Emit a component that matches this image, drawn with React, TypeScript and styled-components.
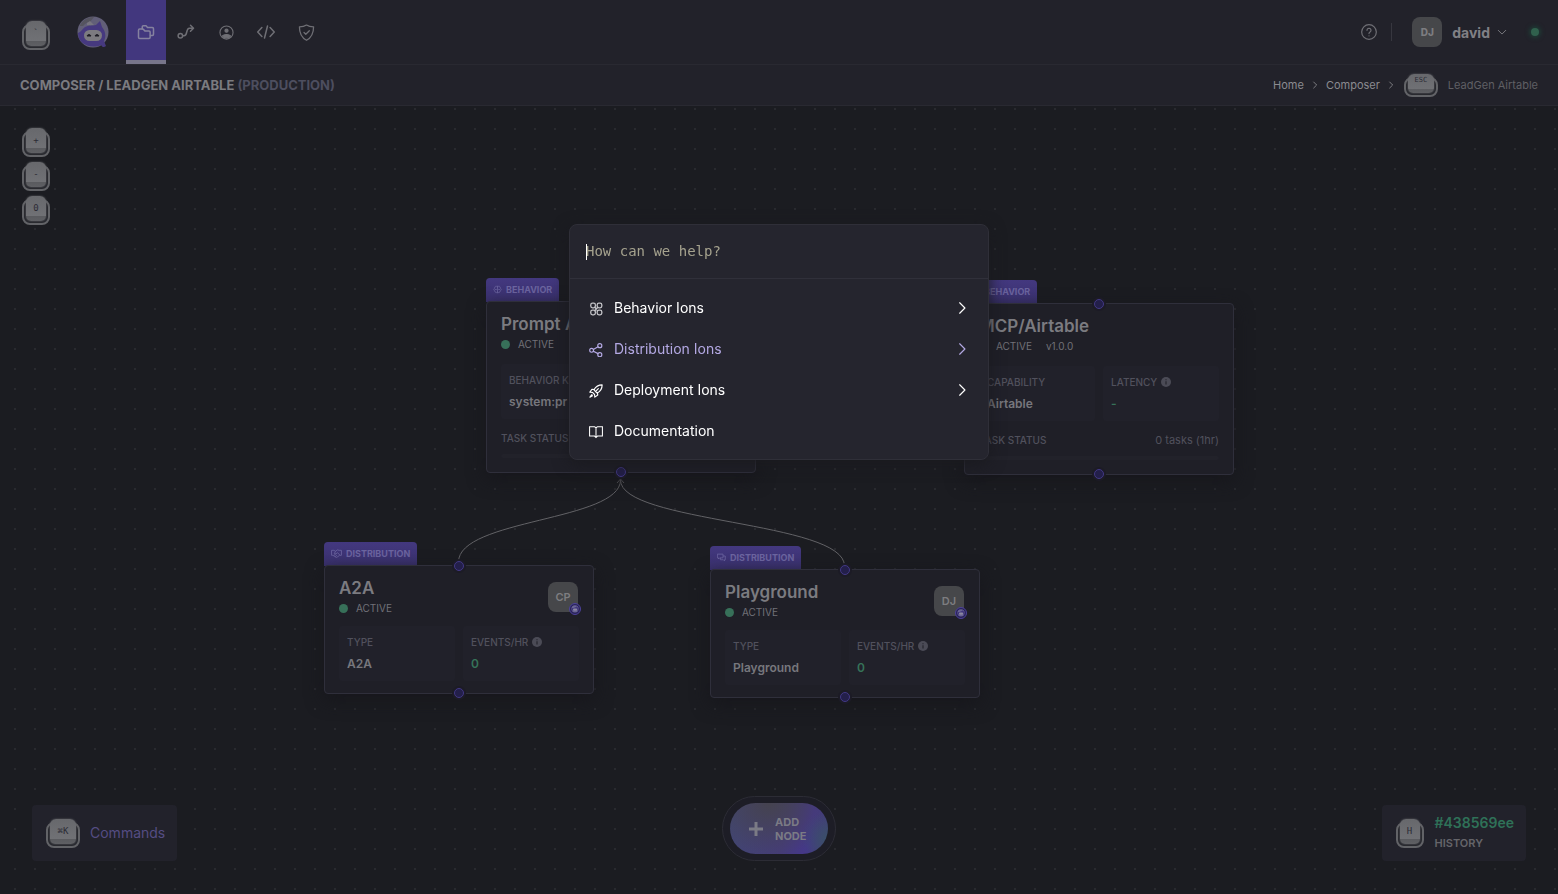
import React from "react";
import styled, { createGlobalStyle, css } from "styled-components";

const GlobalStyle = createGlobalStyle`
  *, *::before, *::after { box-sizing: border-box; }
  body {
    margin: 0;
    background: #1b1c21;
    color: #7a7a80;
    font-family: Inter, "Liberation Sans", sans-serif;
    font-size: 11px;
  }
  button, input { font: inherit; color: inherit; background: none; border: 0; padding: 0; margin: 0; }
  a { color: inherit; text-decoration: none; }
  h1, h2, p, dl, dd, dt, ul, ol { margin: 0; padding: 0; font-size: inherit; list-style: none; }
  svg { display: block; flex: none; }
`;

const Page = styled.div`
  min-height: 100vh;
  display: flex;
  flex-direction: column;
`;

/* ---------- keyboard caps ---------- */

const KeyFrame = styled.button<{ $w: number; $h: number }>`
  position: relative;
  flex: none;
  display: block;
  width: ${(p) => p.$w}px;
  height: ${(p) => p.$h}px;
  padding: 1px 4px 4px;
  &::before {
    content: "";
    position: absolute;
    inset: 4px 0 0;
    border: 2px solid #626367;
    border-radius: 8px;
    background: #26272d;
  }
`;

const KeyFace = styled.span<{ $size: number; $small: boolean }>`
  position: relative;
  display: block;
  height: 100%;
  padding-top: ${(p) => (p.$small ? 1 : 7)}px;
  border-radius: 6px 6px 5px 5px;
  background: linear-gradient(#67686c, #707175 78%, #5a5b5f 82%, #5f6064);
  box-shadow: 0 0 2px #66676b;
  font-family: "DejaVu Sans Mono", monospace;
  font-size: ${(p) => p.$size}px;
  line-height: 10px;
  text-align: center;
  white-space: nowrap;
  color: #2b2b35;
`;

function KeyCap({ label, w = 28, h = 30, size = 9, title }: { label: string; w?: number; h?: number; size?: number; title: string }) {
  return (
    <KeyFrame $w={w} $h={h} type="button" aria-label={title}>
      <KeyFace $size={size} $small={h < 30}>{label}</KeyFace>
    </KeyFrame>
  );
}

/* ---------- top bars ---------- */

const TopBar = styled.header`
  display: flex;
  align-items: center;
  height: 65px;
  padding: 0 15px 0 22px;
  background: #22222a;
  border-bottom: 1px solid #292931;
`;

const BrandLink = styled.a`
  margin: 0 17px 0 27px;
`;

const KeySlot = styled.div`
  padding-top: 6px;
`;

const Nav = styled.nav`
  display: flex;
  height: 64px;
`;

const NavTab = styled.a<{ $active?: boolean }>`
  display: flex;
  align-items: center;
  justify-content: center;
  width: 40px;
  height: 64px;
  color: #6f6f75;
  border-bottom: 4px solid transparent;
  border-top: 4px solid transparent;
  ${(p) =>
    p.$active &&
    css`
      background: #42377e;
      border-top-color: #42377e;
      border-bottom-color: #77758a;
      color: #85819f;
    `}
`;

const Account = styled.div`
  display: flex;
  align-items: center;
  margin-left: auto;
`;

const IconButton = styled.button`
  display: flex;
  color: #6f6f75;
`;

const Divider = styled.span`
  width: 1px;
  height: 18px;
  margin: 0 20px 0 14px;
  background: #37373f;
`;

const Avatar = styled.span<{ $small?: boolean }>`
  display: grid;
  place-items: center;
  width: 30px;
  height: 30px;
  border-radius: 8px;
  background: #46474a;
  color: #7d7d80;
  font-size: ${(p) => (p.$small ? 10 : 11)}px;
  font-weight: ${(p) => (p.$small ? 800 : 600)};
`;

const UserButton = styled.button`
  display: flex;
  align-items: center;
  gap: 7px;
  margin-left: 10px;
  color: #808085;
  font-size: 14px;
  font-weight: 700;
`;

const OnlineDot = styled.span`
  width: 8px;
  height: 8px;
  margin: 0 4px 0 24px;
  border-radius: 50%;
  background: #30614d;
  box-shadow: 0 0 4px 2px #1e3c35;
`;

const TitleBar = styled.div`
  display: flex;
  align-items: center;
  justify-content: space-between;
  height: 41px;
  padding: 0 20px;
  background: #22222a;
  border-bottom: 1px solid #292931;
`;

const PageTitle = styled.h1`
  font-size: 13px;
  font-weight: 700;
  line-height: 16px;
  color: #7b7b80;
  text-transform: uppercase;
`;

const Muted = styled.span`
  color: #4d4e5f;
`;

const Crumbs = styled.ol`
  display: flex;
  align-items: center;
  gap: 7px;
  font-size: 11px;
  color: #8b8b90;
  li { display: flex; align-items: center; gap: 7px; }
`;

const CurrentCrumb = styled.span`
  margin-left: 3px;
  color: #5f5f64;
`;

const BackSlot = styled.span`
  padding-left: 2px;
`;

/* ---------- canvas ---------- */

const Canvas = styled.main`
  position: relative;
  flex: 1;
  overflow: hidden;
  background-color: #1b1c21;
  background-image: radial-gradient(circle at 50% 50%, #292a2f 0, #292a2f 1px, transparent 1px);
  background-size: 20px 20px;
  background-position: 5px -7px;
`;

const ZoomControls = styled.div`
  position: absolute;
  left: 22px;
  top: 21px;
  display: flex;
  flex-direction: column;
  gap: 4px;
`;

const Edges = styled.svg`
  position: absolute;
  left: 0;
  top: 0;
  width: 100%;
  height: 100%;
`;

const NodeBox = styled.section<{ $x: number; $y: number }>`
  position: absolute;
  left: ${(p) => p.$x}px;
  top: ${(p) => p.$y}px;
  width: 270px;
`;

const NodeTab = styled.div`
  display: inline-flex;
  align-items: center;
  gap: 4px;
  height: 24px;
  padding: 0 7px 2px;
  border-radius: 4px 4px 0 0;
  background: linear-gradient(#43387f, #3a316f);
  color: #6c65a0;
  font-size: 9px;
  font-weight: 700;
  vertical-align: top;
`;

const NodeCard = styled.div`
  position: relative;
  margin-top: -1px;
  padding: 11px 14px 12px;
  border: 1px solid #2f2f3b;
  border-radius: 4px;
  background: #1f1f27;
  box-shadow: 0 6px 18px #17171c;
`;

const NodeHead = styled.div<{ $tall: boolean }>`
  display: flex;
  justify-content: space-between;
  align-items: flex-start;
  height: ${(p) => (p.$tall ? 51 : 49)}px;
`;

const NodeTitle = styled.h2`
  font-size: 17px;
  font-weight: 600;
  line-height: 22px;
  color: #7b7b80;
`;

const Status = styled.p`
  display: flex;
  align-items: center;
  font-size: 10px;
  line-height: 18px;
  color: #717177;
  gap: 14px;
`;

const StatusState = styled.span`
  display: flex;
  align-items: center;
  gap: 8px;
  &::before {
    content: "";
    width: 9px;
    height: 9px;
    border-radius: 50%;
    background: #377059;
  }
`;

const Owner = styled.div`
  position: relative;
  margin: 5px 1px 0 0;
`;

const OwnerBadge = styled.span`
  position: absolute;
  right: -3px;
  bottom: -3px;
`;

const Stats = styled.dl`
  display: grid;
  grid-template-columns: 1fr 1fr;
  gap: 8px;
`;

const Stat = styled.div`
  height: 55px;
  padding: 9px 8px;
  border-radius: 3px;
  background: #21212a;
  white-space: nowrap;
  overflow: hidden;
`;

const StatLabel = styled.dt`
  display: flex;
  align-items: center;
  gap: 4px;
  font-size: 10px;
  font-weight: 500;
  line-height: 14px;
  color: #51515d;
`;

const StatValue = styled.dd<{ $green?: boolean }>`
  padding-top: 7px;
  font-size: 12px;
  font-weight: 600;
  line-height: 16px;
  color: ${(p) => (p.$green ? "#367259" : "#77777d")};
`;

const TaskRow = styled.div`
  display: flex;
  justify-content: space-between;
  margin-top: 12px;
  font-size: 10px;
  font-weight: 500;
  line-height: 14px;
  color: #51515d;
`;

const TaskCount = styled.span`
  font-size: 11px;
  font-weight: 400;
`;

const TaskTrack = styled.div`
  height: 4px;
  margin: 9px 0 2px;
  border-radius: 2px;
  background: #22222a;
`;

const Port = styled.span<{ $side: "top" | "bottom" }>`
  position: absolute;
  left: calc(50% - 5px);
  ${(p) => p.$side}: -5px;
  width: 10px;
  height: 10px;
  border-radius: 50%;
  border: 1px solid #423885;
  background: #231f4a;
  box-shadow: 0 0 0 2px #1c1b26;
`;

/* ---------- bottom dock ---------- */

const Dock = styled.div`
  position: absolute;
  left: 0;
  right: 0;
  bottom: 33px;
  display: grid;
  grid-template-columns: 1fr auto 1fr;
  align-items: end;
  padding: 0 32px;
`;

const DockPanel = styled.div<{ $end?: boolean }>`
  display: flex;
  align-items: center;
  justify-self: ${(p) => (p.$end ? "end" : "start")};
  gap: ${(p) => (p.$end ? 11 : 10)}px;
  height: 56px;
  padding: 0 12px 0 14px;
  border-radius: 4px;
  background: #22222b;
`;

const CommandsLabel = styled.span`
  color: #554d83;
  font-size: 14px;
  line-height: 20px;
`;

const Commit = styled.div`
  font-weight: 600;
  line-height: 20px;
`;

const Hash = styled.p`
  color: #2f7158;
  font-size: 14px;
`;

const HistoryLabel = styled.p`
  font-size: 11px;
  color: #65656a;
`;

const AddRing = styled.div`
  padding: 6px 7px;
  border: 1px solid #2c2c35;
  border-radius: 34px;
  background: #1d1d26;
`;

const AddButton = styled.button`
  display: flex;
  align-items: center;
  gap: 11px;
  width: 98px;
  height: 51px;
  padding: 0 18px;
  border-radius: 26px;
  background:
    radial-gradient(circle at 100% 70%, #3a5069 0, transparent 26%),
    radial-gradient(ellipse at 40% 0, #45434f 0, transparent 75%),
    linear-gradient(100deg, #414672, #453c78 55%, #45378a 80%, #413f70);
  color: #7b7b85;
  font-size: 11px;
  font-weight: 700;
  line-height: 14px;
  text-align: left;
`;

/* ---------- command palette ---------- */

const Overlay = styled.div`
  position: fixed;
  inset: 0;
  display: flex;
  justify-content: center;
  align-items: flex-start;
  padding-top: 224px;
`;

const Palette = styled.div`
  width: 420px;
  border: 1px solid #2f2f38;
  border-radius: 8px;
  background: #25252e;
  box-shadow: 0 4px 16px #1a1a1f;
`;

const SearchRow = styled.div`
  position: relative;
  height: 54px;
  padding: 11px 16px 0;
  border-bottom: 1px solid #30303a;
`;

const Caret = styled.span`
  position: absolute;
  left: 16px;
  top: 19px;
  width: 1px;
  height: 16px;
  background: #ffffff;
`;

const SearchInput = styled.input`
  display: block;
  width: 100%;
  height: 30px;
  outline: none;
  caret-color: transparent;
  font-family: "DejaVu Sans Mono", monospace;
  font-size: 14px;
  color: #ffffff;
  &::placeholder { color: #a5a28e; opacity: 1; }
`;

const Options = styled.ul`
  padding: 8px 0;
`;

const OptionButton = styled.button<{ $selected?: boolean }>`
  display: flex;
  align-items: center;
  gap: 11px;
  width: 100%;
  height: 41px;
  padding: 0 19px;
  font-size: 14px;
  line-height: 20px;
  text-align: left;
  color: ${(p) => (p.$selected ? "#b4a9e4" : "#ffffff")};
`;

const OptionIcon = styled.span`
  padding-top: 2px;
`;

const OptionLabel = styled.span`
  flex: 1;
`;

/* ---------- drawings ---------- */

const Icon = ({ size = 16, sw = 2, children }: { size?: number; sw?: number; children: React.ReactNode }) => (
  <svg width={size} height={size} viewBox="0 0 24 24" fill="none" stroke="currentColor" strokeWidth={sw} strokeLinecap="round" strokeLinejoin="round" aria-hidden="true">
    {children}
  </svg>
);

const Chevron = ({ size = 10, sw = 2.4 }: { size?: number; sw?: number }) => (
  <Icon size={size} sw={sw}><path d="M8 3l9 9-9 9" /></Icon>
);

const FoldersIcon = () => (
  <Icon size={18} sw={2}>
    <path d="M7 8V5a1.500 1.500 0 0 1 1.500-1.500H12L14 6h6.500A1.500 1.500 0 0 1 22 7.500V15a1.500 1.500 0 0 1-1.500 1.500H18" />
    <path d="M3.500 8H8l2.500 2.500H16a1.500 1.500 0 0 1 1.500 1.500v7a1.500 1.500 0 0 1-1.500 1.500H3.500A1.500 1.500 0 0 1 2 19V9.500A1.500 1.500 0 0 1 3.500 8z" />
  </Icon>
);
const RouteIcon = () => (
  <Icon size={18}>
    <circle cx="4.500" cy="17" r="3" />
    <path d="M7.500 17h2c5 0 2-10 7-10h5M18 3l4 4-4 4" />
  </Icon>
);
const UserIcon = () => (
  <Icon size={15} sw={1.8}>
    <circle cx="12" cy="12" r="10.500" />
    <circle cx="12" cy="9" r="2.500" fill="currentColor" />
    <path d="M5.500 17.500c2.500-3 10.500-3 13 0-2 4-11 4-13 0z" fill="currentColor" />
  </Icon>
);
const CodeIcon = () => (
  <Icon size={18}><path d="M6.500 6L1 12l5.500 6M17.500 6l5.500 6-5.500 6M14 4l-4 16" /></Icon>
);
const ShieldIcon = () => (
  <Icon size={17} sw={1.8}>
    <path d="M12 1.500c3 2 6 2.500 10 2.500 0 9-2 15-10 19C4 19 2 13 2 4c4 0 7-.5 10-2.500z" />
    <path d="M8.500 12l2.500 2.500 5-5" />
  </Icon>
);
const HelpIcon = () => (
  <Icon sw={1.8}>
    <circle cx="12" cy="12" r="11" />
    <path d="M9 9.500a3 3 0 1 1 4.500 2.600c-1 .6-1.500 1.100-1.500 2.200M12 17.600v.2" />
  </Icon>
);
const InfoIcon = () => (
  <svg width="10" height="10" viewBox="0 0 10 10" aria-hidden="true">
    <circle cx="5" cy="5" r="5" fill="#4b4b56" />
    <path d="M5 2.200v1M5 4.300v3.300" stroke="#25252e" strokeWidth="1.200" />
  </svg>
);
const BrainIcon = () => (
  <Icon size={9}><path d="M12 3v18M12 5C8 1 4 4 5 8c-4 2-4 6 0 8 0 5 5 6 7 3M12 5c4-4 8-1 7 3 4 2 4 6 0 8 0 5-5 6-7 3M6 12h3M15 12h3" /></Icon>
);
const HandshakeIcon = () => (
  <svg width="11" height="9" viewBox="0 0 24 20" fill="none" stroke="currentColor" strokeWidth="1.900" aria-hidden="true">
    <path d="M1 3h5l4 2 4-3 4 1h5v11h-4l-7 5-8-5H1zM10 5l-3 5 4 1 3-3 6 6M6 14l4-2M9 17l4-3" />
  </svg>
);
const ChatIcon = () => (
  <Icon size={9} sw={2.2}><path d="M2 3h14v10H7l-3 3v-3H2zM17 8h5v10h-2v3l-3-3H9v-4" /></Icon>
);
const FoxLogo = () => (
  <svg width="32" height="32" viewBox="0 0 32 32" role="img" aria-label="Home">
    <circle cx="16" cy="16" r="15.500" fill="#625f78" />
    <path d="M2.500 10A15 15 0 0 1 17 1l-4 5c-3 0-5 2-7 4z" fill="#55545f" />
    <path d="M1 17c3-1 4-4 7-6 4-2 7-1 11-2l4-4 2 6c4 5 4 10 2 14l2 5c-2 2-4 1-5-1-9 4-23 0-23-12z" fill="#46397f" />
    <path d="M10 7l3-2 4 4h-7z" fill="#77757f" />
    <rect x="7" y="14" width="18" height="11" rx="5.500" fill="#7c7b80" />
    <path d="M10 20c1-2 3-2 4 0zM18 20c1-2 3-2 4 0z" fill="#1d1c24" stroke="#1d1c24" />
  </svg>
);
const FoxBadge = () => (
  <svg width="12" height="12" viewBox="0 0 12 12" aria-hidden="true">
    <circle cx="6" cy="6" r="5.500" fill="#282258" stroke="#4d429a" />
    <circle cx="6" cy="5.800" r="3.600" fill="#6a6596" />
    <path d="M2.800 5c2 0 4-.6 5-1.800L9.200 5v2.500H2.800z" fill="#40367d" />
    <rect x="4" y="5.600" width="4.200" height="2.200" rx="1" fill="#8a88a0" />
  </svg>
);
const PlusIcon = () => (
  <svg width="16" height="16" viewBox="0 0 16 16" aria-hidden="true">
    <path d="M8 1v14M1 8h14" stroke="currentColor" strokeWidth="3" />
  </svg>
);
const BehaviorIcon = () => (
  <Icon size={14} sw={2.2}>
    <g stroke="#c4c4c8">
      <rect x="3" y="2" width="8" height="8" rx="3" />
      <rect x="14" y="2" width="8" height="8" rx="3" />
      <rect x="3" y="14" width="8" height="8" rx="3" />
      <rect x="14" y="14" width="8" height="8" rx="3" />
      <path d="M10 9l5 6M15 9l-5 6" />
    </g>
  </Icon>
);
const ShareIcon = () => (
  <Icon size={14}>
    <circle cx="4.500" cy="12.500" r="3.300" />
    <circle cx="18.500" cy="4.500" r="3.500" />
    <circle cx="18.500" cy="20" r="3.500" />
    <path d="M7.500 11l8-4.500M7.500 14l8 4.200" />
  </Icon>
);
const RocketIcon = () => (
  <Icon size={14}>
    <path d="M22.500 1.500c-7 0-11 3-14 8.500l5.500 5.500c5.500-3 8.500-7 8.500-14z" />
    <path d="M9 9.500l-4-.5-3.500 5 4.500.5M14.500 15l.5 4-5 3.500-.5-4.500M11 13l5-5M6 14.500l3.500 3.500M5 18l-3.500 4.500L6 20" />
  </Icon>
);
const BookIcon = () => (
  <Icon size={14} sw={1.8}><path d="M1 3h8.500l2.500 1.500L14.500 3H23v16h-8.500L12 21.500 9.500 19H1zM12 4.500v17" strokeLinejoin="miter" /></Icon>
);

/* ---------- data ---------- */

type Item = { label: string; value: string; info?: boolean; green?: boolean };
type NodeData = {
  x: number;
  y: number;
  tab: string;
  icon: React.ReactNode;
  title: string;
  version?: string;
  owner?: string;
  stats: Item[];
  hasTasks?: boolean;
  tasks?: string;
};

const nodes: NodeData[] = [
  {
    x: 486, y: 172, tab: "Behavior", icon: <BrainIcon />, title: "Prompt A",
    stats: [{ label: "BEHAVIOR K", value: "system:pr" }],
    hasTasks: true,
  },
  {
    x: 964, y: 174, tab: "Behavior", icon: <BrainIcon />, title: "MCP/Airtable", version: "v1.0.0",
    stats: [{ label: "CAPABILITY", value: "Airtable" }, { label: "LATENCY", value: "-", info: true, green: true }],
    hasTasks: true, tasks: "0 tasks (1hr)",
  },
  {
    x: 324, y: 436, tab: "Distribution", icon: <HandshakeIcon />, title: "A2A", owner: "CP",
    stats: [{ label: "TYPE", value: "A2A" }, { label: "EVENTS/HR", value: "0", info: true, green: true }],
  },
  {
    x: 710, y: 440, tab: "Distribution", icon: <ChatIcon />, title: "Playground", owner: "DJ",
    stats: [{ label: "TYPE", value: "Playground" }, { label: "EVENTS/HR", value: "0", info: true, green: true }],
  },
];

function FlowNode({ node }: { node: NodeData }) {
  return (
    <NodeBox $x={node.x} $y={node.y}>
      <NodeTab>{node.icon}{node.tab.toUpperCase()}</NodeTab>
      <NodeCard>
        <NodeHead $tall={!!node.hasTasks}>
          <div>
            <NodeTitle>{node.title}</NodeTitle>
            <Status>
              <StatusState>ACTIVE</StatusState>
              {node.version && <span>{node.version}</span>}
            </Status>
          </div>
          {node.owner && (
            <Owner>
              <Avatar>{node.owner}</Avatar>
              <OwnerBadge><FoxBadge /></OwnerBadge>
            </Owner>
          )}
        </NodeHead>
        <Stats>
          {node.stats.map((s) => (
            <Stat key={s.label}>
              <StatLabel>{s.label}{s.info && <InfoIcon />}</StatLabel>
              <StatValue $green={s.green}>{s.value}</StatValue>
            </Stat>
          ))}
        </Stats>
        {node.hasTasks && (
          <>
            <TaskRow>
              <span>TASK STATUS</span>
              {node.tasks && <TaskCount>{node.tasks}</TaskCount>}
            </TaskRow>
            <TaskTrack />
          </>
        )}
        <Port $side="top" />
        <Port $side="bottom" />
      </NodeCard>
    </NodeBox>
  );
}

const navItems = [
  { name: "Composer", icon: <FoldersIcon />, active: true },
  { name: "Flows", icon: <RouteIcon /> },
  { name: "Users", icon: <UserIcon /> },
  { name: "Developers", icon: <CodeIcon /> },
  { name: "Security", icon: <ShieldIcon /> },
];

const options = [
  { label: "Behavior Ions", icon: <BehaviorIcon />, more: true },
  { label: "Distribution Ions", icon: <ShareIcon />, more: true, selected: true },
  { label: "Deployment Ions", icon: <RocketIcon />, more: true },
  { label: "Documentation", icon: <BookIcon /> },
];

export default function App() {
  return (
    <Page>
      <GlobalStyle />
      <TopBar>
        <KeySlot><KeyCap label="`" title="Toggle menu" /></KeySlot>
        <BrandLink href="#"><FoxLogo /></BrandLink>
        <Nav>
          {navItems.map((n) => (
            <NavTab key={n.name} href="#" $active={n.active} aria-label={n.name}>{n.icon}</NavTab>
          ))}
        </Nav>
        <Account>
          <IconButton type="button" aria-label="Help"><HelpIcon /></IconButton>
          <Divider />
          <Avatar $small>DJ</Avatar>
          <UserButton type="button">
            david
            <Icon size={10} sw={2.2}><path d="M3 8l9 9 9-9" /></Icon>
          </UserButton>
          <OnlineDot />
        </Account>
      </TopBar>
      <TitleBar>
        <PageTitle>Composer / LeadGen Airtable <Muted>(Production)</Muted></PageTitle>
        <nav aria-label="Breadcrumb">
          <Crumbs>
            <li><a href="#">Home</a><Chevron size={8} sw={2.6} /></li>
            <li><a href="#">Composer</a><Chevron size={8} sw={2.6} /></li>
            <li>
              <BackSlot><KeyCap label="ESC" w={34} h={24} size={7} title="Go back" /></BackSlot>
              <CurrentCrumb>LeadGen Airtable</CurrentCrumb>
            </li>
          </Crumbs>
        </nav>
      </TitleBar>
      <Canvas>
        <Edges fill="none" stroke="#626266" strokeWidth="1" aria-hidden="true">
          <path d="M620.500 374C620.500 415 458.500 413 458.500 456" />
          <path d="M620.500 374C620.500 417 844.500 415 844.500 460" />
          <path d="M617 377l3.500-4 3.500 4" />
        </Edges>
        {nodes.map((n) => <FlowNode key={n.title} node={n} />)}
        <ZoomControls>
          <KeyCap label="+" title="Zoom in" />
          <KeyCap label="-" title="Zoom out" />
          <KeyCap label="0" title="Reset zoom" />
        </ZoomControls>
        <Dock>
          <DockPanel>
            <KeyCap label="⌘K" w={34} title="Open commands" />
            <CommandsLabel>Commands</CommandsLabel>
          </DockPanel>
          <AddRing>
            <AddButton type="button"><PlusIcon /><span>ADD<br />NODE</span></AddButton>
          </AddRing>
          <DockPanel $end>
            <KeyCap label="H" title="Open history" />
            <Commit>
              <Hash>#438569ee</Hash>
              <HistoryLabel>HISTORY</HistoryLabel>
            </Commit>
          </DockPanel>
        </Dock>
      </Canvas>
      <Overlay>
        <Palette role="dialog" aria-label="Command palette">
          <SearchRow>
            <Caret />
            <SearchInput type="text" placeholder="How can we help?" aria-label="Search commands" />
          </SearchRow>
          <Options>
            {options.map((o) => (
              <li key={o.label}>
                <OptionButton type="button" $selected={o.selected}>
                  <OptionIcon>{o.icon}</OptionIcon>
                  <OptionLabel>{o.label}</OptionLabel>
                  {o.more && <Chevron size={14} sw={2} />}
                </OptionButton>
              </li>
            ))}
          </Options>
        </Palette>
      </Overlay>
    </Page>
  );
}
